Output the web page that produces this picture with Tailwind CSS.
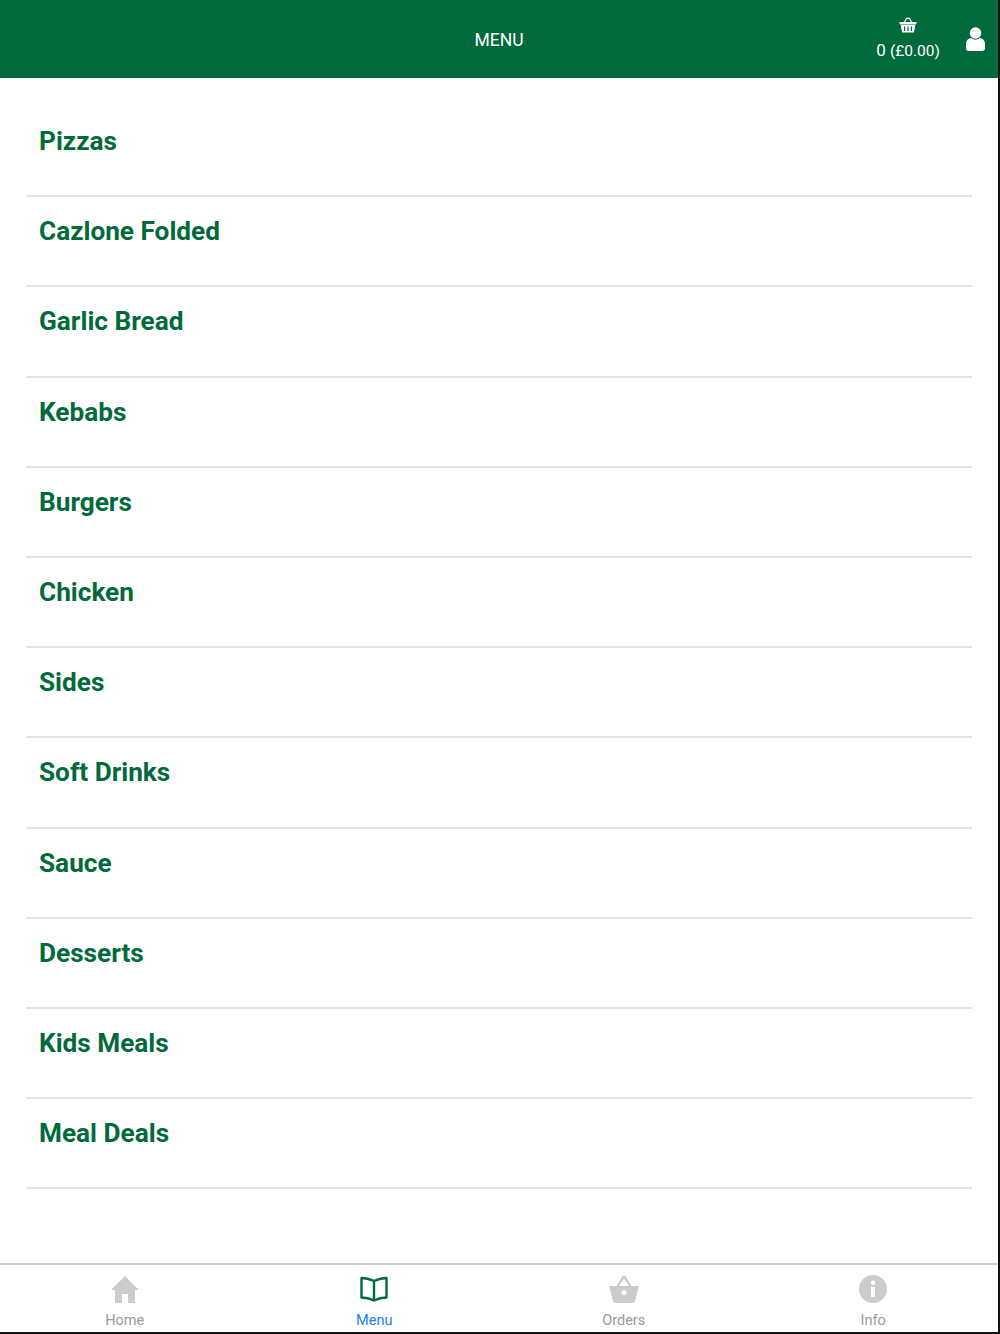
<!DOCTYPE html>
<html lang="en">
<head>
    <meta charset="UTF-8">
    <meta name="viewport" content="width=device-width, initial-scale=1.0">
    <title>Menu</title>
    <script src="https://cdn.jsdelivr.net/npm/@tailwindcss/browser@4"></script>
</head>
<body class="bg-[#111] font-['Roboto',sans-serif] overflow-hidden">
    <div class="flex flex-col h-[1332px] w-[998px] bg-white">
        <!-- Header -->
        <header class="relative flex items-center justify-center h-[78px] shrink-0 bg-[#016a3b] text-white">
            <span class="text-[17.5px] mt-[3px]">MENU</span>
            <div class="absolute left-[876px] top-[16px] flex flex-col items-center w-[64px]">
                <svg class="w-[18px] h-[18px]" viewBox="0 0 18 18" fill="#fff">
                    <path d="M5 6 L7 2 Q9 1 11 2 L13 6 L11.8 6 L10.4 3.2 Q9 2.6 7.6 3.2 L6.2 6 Z"/>
                    <rect x="0.5" y="6" width="17" height="2.4" rx="0.8"/>
                    <path fill-rule="evenodd" d="M1.7 9 H16.3 L15 16.6 H3 Z M5 10.5 V15 H6.2 V10.5 Z M8.4 10.5 V15 H9.6 V10.5 Z M11.8 10.500 V15 H13 V10.5 Z"/>
                </svg>
                <span class="text-[17px] leading-[20px] mt-[6px] whitespace-nowrap">0 <span class="text-[15.5px]">(£0.00)</span></span>
            </div>
            <svg class="absolute left-[966px] top-[27px] w-[19px] h-[24px]" viewBox="0 0 19 24" fill="#fff">
                <circle cx="9.5" cy="6" r="5.8"/>
                <path d="M5 11 Q9.500 14.500 14 11 Q19 12 19 17 V21 Q19 24 16 24 H3 Q0 24 0 21 V17 Q0 12 5 11 Z"/>
            </svg>
        </header>

        <!-- Category list -->
        <ul class="flex-1 pt-[29px] px-[26px] text-[#016a3b] text-[26.2px] font-bold leading-[38px]">
            <li class="h-[90.2px] pl-[13px] pt-[15px] border-b-2 border-[#e3e3e3]">Pizzas</li>
            <li class="h-[90.2px] pl-[13px] pt-[15px] border-b-2 border-[#e3e3e3]">Cazlone Folded</li>
            <li class="h-[90.2px] pl-[13px] pt-[15px] border-b-2 border-[#e3e3e3]">Garlic Bread</li>
            <li class="h-[90.2px] pl-[13px] pt-[15px] border-b-2 border-[#e3e3e3]">Kebabs</li>
            <li class="h-[90.2px] pl-[13px] pt-[15px] border-b-2 border-[#e3e3e3]">Burgers</li>
            <li class="h-[90.2px] pl-[13px] pt-[15px] border-b-2 border-[#e3e3e3]">Chicken</li>
            <li class="h-[90.2px] pl-[13px] pt-[15px] border-b-2 border-[#e3e3e3]">Sides</li>
            <li class="h-[90.2px] pl-[13px] pt-[15px] border-b-2 border-[#e3e3e3]">Soft Drinks</li>
            <li class="h-[90.2px] pl-[13px] pt-[15px] border-b-2 border-[#e3e3e3]">Sauce</li>
            <li class="h-[90.2px] pl-[13px] pt-[15px] border-b-2 border-[#e3e3e3]">Desserts</li>
            <li class="h-[90.2px] pl-[13px] pt-[15px] border-b-2 border-[#e3e3e3]">Kids Meals</li>
            <li class="h-[90.2px] pl-[13px] pt-[15px] border-b-2 border-[#e3e3e3]">Meal Deals</li>
        </ul>

        <!-- Bottom tabs -->
        <nav class="grid grid-cols-4 h-[69px] shrink-0 border-t-2 border-[#cfcfcf] text-[#9a9a9a] text-[14.5px]">
            <a class="flex flex-col items-center pt-[10px]">
                <svg class="w-[28px] h-[28px]" viewBox="0 0 28 28" fill="#cccccc"><path d="M14 1 L28 15 H24 V28 H17 V19 H11 V28 H4 V15 H0 Z"/></svg>
                <span class="leading-[20px] mt-[8px]">Home</span>
            </a>
            <a class="flex flex-col items-center pt-[10px]">
                <svg class="w-[28px] h-[28px]" viewBox="0 0 28 28" fill="none" stroke="#016a3b" stroke-width="2.4" stroke-linejoin="round"><path d="M14 6 Q7 3 1.5 3 V22.5 Q8 22.5 14 25.5 Q20 22.5 26.5 22.5 V3 Q21 3 14 6 Z M14 6 V25.5"/></svg>
                <span class="leading-[20px] mt-[8px] text-[#1a83f0]">Menu</span>
            </a>
            <a class="flex flex-col items-center pt-[10px]">
                <svg class="w-[30px] h-[28px]" viewBox="0 0 30 28" fill="#cccccc"><path fill-rule="evenodd" d="M0 11 H7.5 L13.5 1 Q15 0 16.5 1 L22.5 11 H30 L26 26 Q25.5 28 23.5 28 H6.5 Q4.500 28 4 26 Z M10 11 H20 L15 3.500 Z M15 15 A2.500 2.500 0 1 0 15 20 A2.500 2.500 0 1 0 15 15 Z"/></svg>
                <span class="leading-[20px] mt-[8px]">Orders</span>
            </a>
            <a class="flex flex-col items-center pt-[10px]">
                <svg class="w-[28px] h-[28px]" viewBox="0 0 28 28" fill="#cccccc"><path fill-rule="evenodd" d="M14 0 A14 14 0 1 0 14 28 A14 14 0 1 0 14 0 Z M14 5.500 A2.200 2.200 0 1 0 14 9.900 A2.200 2.200 0 1 0 14 5.500 Z M12 12 H16 V22 H12 Z"/></svg>
                <span class="leading-[20px] mt-[8px]">Info</span>
            </a>
        </nav>
    </div>
</body>
</html>
